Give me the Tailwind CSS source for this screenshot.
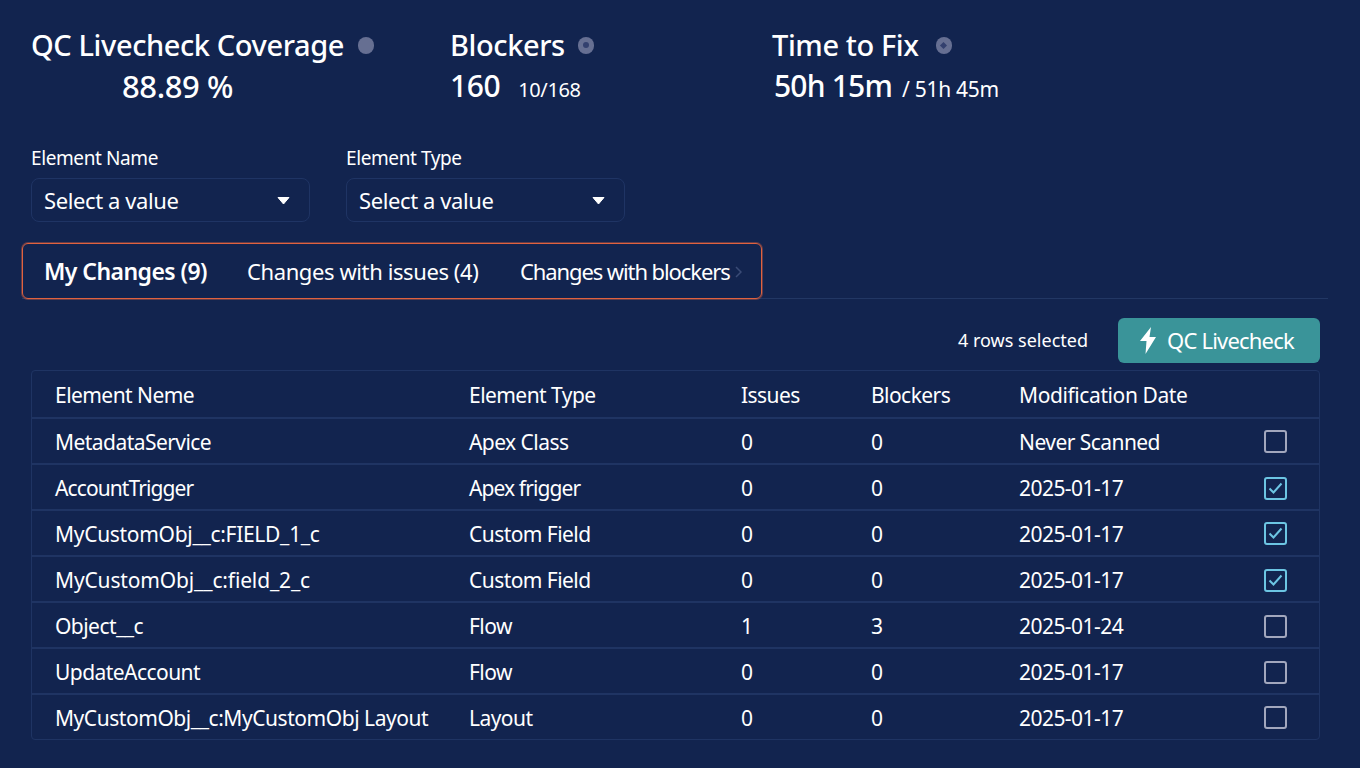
<!DOCTYPE html>
<html lang="en">
<head>
    <meta charset="UTF-8">
    <title>QC Livecheck</title>
    <script src="https://cdn.jsdelivr.net/npm/@tailwindcss/browser@4"></script>
</head>
<body class="bg-[#12244f] text-white font-['Noto_Sans',sans-serif] w-[1360px] h-[768px] overflow-hidden">
    <div class="pt-[26px] pl-[31px] pr-[32px]">
        <!-- Stats -->
        <div class="flex h-[76px] tracking-[-0.4px]">
            <div class="w-[419px]">
                <div class="flex items-center h-[38px] text-[29px] font-medium">QC Livecheck Coverage<span class="ml-[14px] w-[16px] h-[17px] rounded-full bg-[#666f92]"></span></div>
                <div class="pl-[91px] h-[38px] text-[31px] font-medium leading-[44px]">88.89 %</div>
            </div>
            <div class="w-[322px]">
                <div class="flex items-center h-[38px] text-[29px] font-medium">Blockers<span class="ml-[13px] w-[16px] h-[17px] rounded-full bg-[#666f92] flex items-center justify-center"><span class="w-[6px] h-[6px] rounded-full bg-[#33406e]"></span></span></div>
                <div class="flex items-baseline h-[38px] leading-[44px]"><span class="text-[30px] font-medium">160</span><span class="ml-[18px] text-[20px]">10/168</span></div>
            </div>
            <div>
                <div class="flex items-center h-[38px] text-[29px] font-medium">Time to Fix<span class="ml-[17px] w-[16px] h-[17px] rounded-full bg-[#666f92] flex items-center justify-center"><span class="w-[5px] h-[5px] rotate-45 bg-[#33406e]"></span></span></div>
                <div class="flex items-baseline h-[38px] leading-[44px] pl-[2px]"><span class="text-[30px] font-medium tracking-[-0.8px]">50h 15m</span><span class="ml-[10px] text-[21px] tracking-[-0.3px]">/ 51h 45m</span></div>
            </div>
        </div>

        <!-- Filters -->
        <div class="flex gap-[36px] mt-[43px] tracking-[-0.4px]">
            <div class="w-[279px]">
                <div class="text-[19px] h-[26px] leading-[26px]">Element Name</div>
                <div class="mt-[7px] h-[44px] border border-[#1f3464] rounded-lg flex items-center justify-between pl-[12px] pr-[19px] pt-[1px] text-[22px]">Select a value
                    <svg class="-mt-[1px]" width="13" height="9" viewBox="0 0 13 9"><path d="M1 1.5h11L6.5 8z" fill="#fff" stroke="#fff" stroke-linejoin="round"/></svg>
                </div>
            </div>
            <div class="w-[279px]">
                <div class="text-[19px] h-[26px] leading-[26px]">Element Type</div>
                <div class="mt-[7px] h-[44px] border border-[#1f3464] rounded-lg flex items-center justify-between pl-[12px] pr-[19px] pt-[1px] text-[22px]">Select a value
                    <svg class="-mt-[1px]" width="13" height="9" viewBox="0 0 13 9"><path d="M1 1.5h11L6.5 8z" fill="#fff" stroke="#fff" stroke-linejoin="round"/></svg>
                </div>
            </div>
        </div>

        <!-- Tabs -->
        <div class="mt-[21px] -ml-[9px] border-b border-[#223764] h-[56px]">
            <div class="w-[740px] h-[56px] border border-[#e0623f] shadow-[0_0_0_1px_rgba(224,98,63,0.4)] rounded-md flex items-center pl-[21px] pt-[1px] text-[22px] tracking-[-0.4px]">
                <span class="font-semibold text-[23px] tracking-[-0.55px] w-[203px]">My Changes (9)</span>
                <span class="w-[273px]">Changes with issues (4)</span>
                <span class="tracking-[-1.1px]">Changes with blockers</span>
                <svg class="ml-[5px]" width="7" height="12" viewBox="0 0 7 12"><path d="M1 1l5 5-5 5" fill="none" stroke="#3a4b76" stroke-width="1.5"/></svg>
            </div>
        </div>

        <!-- Actions -->
        <div class="flex items-center justify-end gap-[30px] mt-[19px] h-[45px] mr-[8px]">
            <span class="text-[18px]">4 rows selected</span>
            <button class="w-[202px] h-[45px] rounded-md bg-[#3a9499] flex items-center pl-[22px] text-[22px] tracking-[-0.8px]">
                <svg width="17" height="27" viewBox="0 0 17 27"><path d="M11 0L0 14h6.5L5.5 27 16 10H9.5z" fill="#fff"/></svg>
                <span class="ml-[10px]">QC Livecheck</span>
            </button>
        </div>

        <!-- Table -->
        <div class="mt-[7px] w-[1289px] border border-[#1f3463] rounded text-[21px] tracking-[-0.55px]">
            <div class="grid grid-cols-[414px_272px_130px_148px_1fr] items-center h-[48px] pl-[23px] pt-[4px] border-b-2 border-[#1f3463]">
                <span>Element Neme</span><span>Element Type</span><span>Issues</span><span>Blockers</span><span class="tracking-[-0.4px]">Modification Date</span>
            </div>
            <div class="grid grid-cols-[414px_272px_130px_148px_245px_1fr] items-center h-[46px] pl-[23px] pt-[4px] border-b-2 border-[#1f3463]">
                <span>MetadataService</span><span>Apex Class</span><span>0</span><span>0</span><span>Never Scanned</span>
                <span class="w-[23px] h-[23px] -mt-[4px] border-2 border-[#a2a7bd] rounded-[3px]"></span>
            </div>
            <div class="grid grid-cols-[414px_272px_130px_148px_245px_1fr] items-center h-[46px] pl-[23px] pt-[4px] border-b-2 border-[#1f3463]">
                <span class="tracking-[-0.9px]">AccountTrigger</span><span class="tracking-[-0.9px]">Apex frigger</span><span>0</span><span>0</span><span>2025-01-17</span>
                <span class="w-[23px] h-[23px] -mt-[2px] border-2 border-[#6cc5e3] rounded-[3px] flex items-center justify-center"><svg width="15" height="12" viewBox="0 0 15 12"><path d="M1.5 6.5l4 4 8-9" fill="none" stroke="#6cc5e3" stroke-width="2"/></svg></span>
            </div>
            <div class="grid grid-cols-[414px_272px_130px_148px_245px_1fr] items-center h-[46px] pl-[23px] pt-[4px] border-b-2 border-[#1f3463]">
                <span class="tracking-[-0.3px]">MyCustomObj__c:FIELD_1_c</span><span>Custom Field</span><span>0</span><span>0</span><span>2025-01-17</span>
                <span class="w-[23px] h-[23px] -mt-[4px] border-2 border-[#6cc5e3] rounded-[3px] flex items-center justify-center"><svg width="15" height="12" viewBox="0 0 15 12"><path d="M1.5 6.5l4 4 8-9" fill="none" stroke="#6cc5e3" stroke-width="2"/></svg></span>
            </div>
            <div class="grid grid-cols-[414px_272px_130px_148px_245px_1fr] items-center h-[46px] pl-[23px] pt-[4px] border-b-2 border-[#1f3463]">
                <span class="tracking-[-0.15px]">MyCustomObj__c:field_2_c</span><span>Custom Field</span><span>0</span><span>0</span><span>2025-01-17</span>
                <span class="w-[23px] h-[23px] -mt-[2px] border-2 border-[#6cc5e3] rounded-[3px] flex items-center justify-center"><svg width="15" height="12" viewBox="0 0 15 12"><path d="M1.5 6.5l4 4 8-9" fill="none" stroke="#6cc5e3" stroke-width="2"/></svg></span>
            </div>
            <div class="grid grid-cols-[414px_272px_130px_148px_245px_1fr] items-center h-[46px] pl-[23px] pt-[4px] border-b-2 border-[#1f3463]">
                <span>Object__c</span><span>Flow</span><span>1</span><span>3</span><span>2025-01-24</span>
                <span class="w-[23px] h-[23px] -mt-[2px] border-2 border-[#a2a7bd] rounded-[3px]"></span>
            </div>
            <div class="grid grid-cols-[414px_272px_130px_148px_245px_1fr] items-center h-[46px] pl-[23px] pt-[4px] border-b-2 border-[#1f3463]">
                <span>UpdateAccount</span><span>Flow</span><span>0</span><span>0</span><span>2025-01-17</span>
                <span class="w-[23px] h-[23px] -mt-[2px] border-2 border-[#a2a7bd] rounded-[3px]"></span>
            </div>
            <div class="grid grid-cols-[414px_272px_130px_148px_245px_1fr] items-center h-[44px] pl-[23px] pt-[3px]">
                <span class="tracking-[-0.45px]">MyCustomObj__c:MyCustomObj Layout</span><span>Layout</span><span>0</span><span>0</span><span>2025-01-17</span>
                <span class="w-[23px] h-[23px] -mt-[3px] border-2 border-[#a2a7bd] rounded-[3px]"></span>
            </div>
        </div>
    </div>
</body>
</html>
